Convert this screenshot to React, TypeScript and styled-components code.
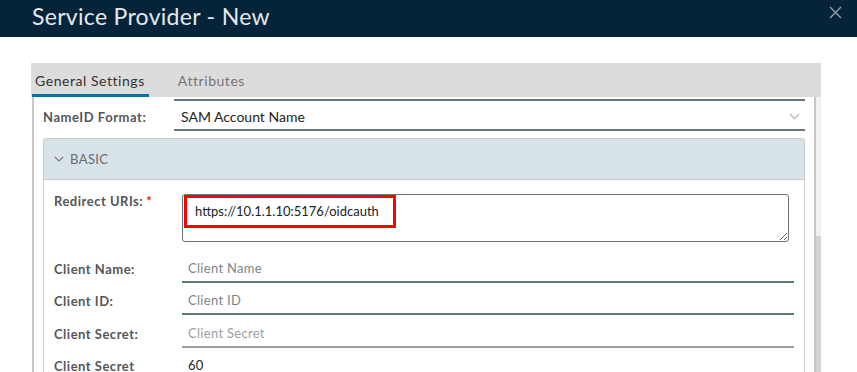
import React from "react";
import styled, { createGlobalStyle } from "styled-components";

const Global = createGlobalStyle`
  html, body { margin: 0; padding: 0; background: #fff; }
  body { font-family: "Lato", "Open Sans", sans-serif; overflow: hidden; }
  * { box-sizing: border-box; }
`;

const Modal = styled.div`
  width: 857px;
  height: 372px;
  background: #fff;
  display: flex;
  flex-direction: column;
  overflow: hidden;
`;

const Header = styled.div`
  height: 37px;
  flex: none;
  background: #05243a;
  display: flex;
  align-items: center;
  justify-content: space-between;
  padding: 0 14px 5px 32px;
`;

const Title = styled.h1`
  margin: 0;
  font-size: 23px;
  font-weight: 400;
  color: #e6e8ea;
  letter-spacing: 0.3px;
`;

const Close = styled.button`
  border: none;
  background: none;
  padding: 0;
  width: 14px;
  height: 14px;
  margin-top: -6px;
  display: flex;
  color: #9aa3aa;
`;

const Body = styled.div`
  flex: 1;
  padding: 26px 36px 0 31px;
  display: flex;
  flex-direction: column;
  min-height: 0;
`;

const TabBar = styled.div`
  height: 34px;
  flex: none;
  background: #dcdcdc;
  display: flex;
  align-items: stretch;
  padding-left: 1px;
`;

const Tab = styled.div<{ $active?: boolean }>`
  display: flex;
  align-items: center;
  padding: 3px ${(p) => (p.$active ? "4px" : "0")} 0 ${(p) => (p.$active ? "3px" : "29px")};
  font-size: 14px;
  letter-spacing: 0.55px;
  color: ${(p) => (p.$active ? "#333" : "#757575")};
  border-bottom: 3px solid ${(p) => (p.$active ? "#0072a3" : "transparent")};
`;

const Panel = styled.div`
  flex: 1;
  display: flex;
  min-height: 0;
  border-left: 2px solid #c9c9c9;
  margin-left: 1px;
`;

const Scroller = styled.div`
  flex: 1;
  padding: 2px 9px 0 9px;
  overflow: hidden;
`;

const ScrollBar = styled.div`
  width: 7px;
  flex: none;
  border-left: 2px solid #c6c6c6;
  background: #f1f1f1;
  display: flex;
  flex-direction: column;
  padding-top: 139px;
`;

const Thumb = styled.div`
  flex: 1;
  background: #d3d3d3;
`;

const TopRow = styled.div`
  display: flex;
  align-items: stretch;
  height: 32px;
`;

const TopLabel = styled.div`
  width: 131px;
  font-size: 13px;
  font-weight: 700;
  letter-spacing: 0.55px;
  color: #565656;
  display: flex;
  align-items: center;
  padding-top: 3px;
`;

const Select = styled.div`
  flex: 1;
  border-top: 2px solid #6b767c;
  border-bottom: 2px solid #6b767c;
  display: flex;
  align-items: center;
  justify-content: space-between;
  padding: 3px 5px 0 7px;
  font-size: 14px;
  color: #222;
`;

const Section = styled.div`
  margin-top: 7px;
  border: 1px solid #cccccc;
  border-radius: 3px 3px 0 0;
  border-bottom: none;
`;

const SectionHead = styled.div`
  height: 41px;
  background: #d8e3e9;
  border-bottom: 1px solid #cccccc;
  display: flex;
  align-items: center;
  gap: 6px;
  padding-left: 10px;
  font-size: 13px;
  color: #6a6a6a;
  letter-spacing: 0.4px;
`;

const SectionBody = styled.div`
  padding: 13px 10px 0 10px;
  display: flex;
  flex-direction: column;
`;

const Row = styled.div<{ $h: number }>`
  display: flex;
  height: ${(p) => p.$h}px;
  align-items: flex-start;
`;

const Label = styled.div<{ $top?: number }>`
  width: 128px;
  flex: none;
  font-size: 13px;
  font-weight: 700;
  letter-spacing: 0.5px;
  color: #565656;
  padding-top: ${(p) => (p.$top ?? 5)}px;
`;

const Req = styled.span`
  color: #e12200;
  margin-left: 3px;
`;

const AreaWrap = styled.div`
  position: relative;
  width: 607px;
  margin-top: 1px;
`;

const Area = styled.textarea`
  display: block;
  width: 607px;
  height: 48px;
  border: 1px solid #66767c;
  border-radius: 3px;
  font-family: "Lato", sans-serif;
  font-size: 13px;
  color: #222;
  padding: 8px 12px;
  resize: vertical;
  outline: none;
  background: transparent;
`;

const Highlight = styled.div`
  position: absolute;
  left: 2px;
  top: 1px;
  width: 212px;
  height: 33px;
  border: 3px solid #ff0000;
  pointer-events: none;
`;

const Input = styled.input<{ $light?: boolean }>`
  width: 613px;
  height: 27px;
  border: none;
  border-bottom: 2px solid ${(p) => (p.$light ? "#969ea2" : "#66757b")};
  font-family: "Lato", sans-serif;
  font-size: 13px;
  letter-spacing: 0.3px;
  color: #222;
  padding: 0 6px 2px;
  outline: none;
  background: transparent;
  &::placeholder { color: ${(p) => (p.$light ? "#9a9ea1" : "#7d8589")}; }
`;

const Chevron = ({ color, size }: { color: string; size: number }) => (
  <svg width={size} height={size * 0.6} viewBox="0 0 12 7" fill="none">
    <path d="M1 1l5 5 5-5" stroke={color} strokeWidth="1.3" />
  </svg>
);

export default function App() {
  return (
    <>
      <Global />
      <Modal>
        <Header>
          <Title>Service Provider - New</Title>
          <Close aria-label="close">
            <svg width="13" height="13" viewBox="0 0 13 13">
              <path d="M1 1l11 11M12 1L1 12" stroke="currentColor" strokeWidth="1.3" />
            </svg>
          </Close>
        </Header>
        <Body>
          <TabBar>
            <Tab $active>General Settings</Tab>
            <Tab>Attributes</Tab>
          </TabBar>
          <Panel>
            <Scroller>
              <TopRow>
                <TopLabel>NameID Format:</TopLabel>
                <Select>
                  <span>SAM Account Name</span>
                  <Chevron color="#b5b5b5" size={11} />
                </Select>
              </TopRow>
              <Section>
                <SectionHead>
                  <Chevron color="#6a6a6a" size={10} />
                  BASIC
                </SectionHead>
                <SectionBody>
                  <Row $h={63}>
                    <Label $top={0}>
                      Redirect URIs:<Req>*</Req>
                    </Label>
                    <AreaWrap>
                      <Area readOnly defaultValue="https://10.1.1.10:5176/oidcauth" />
                      <Highlight />
                    </AreaWrap>
                  </Row>
                  <Row $h={32}>
                    <Label>Client Name:</Label>
                    <Input readOnly placeholder="Client Name" />
                  </Row>
                  <Row $h={33}>
                    <Label>Client ID:</Label>
                    <Input readOnly placeholder="Client ID" />
                  </Row>
                  <Row $h={32}>
                    <Label>Client Secret:</Label>
                    <Input readOnly $light placeholder="Client Secret" />
                  </Row>
                  <Row $h={32}>
                    <Label>Client Secret</Label>
                    <Input readOnly value="60" />
                  </Row>
                </SectionBody>
              </Section>
            </Scroller>
            <ScrollBar>
              <Thumb />
            </ScrollBar>
          </Panel>
        </Body>
      </Modal>
    </>
  );
}
